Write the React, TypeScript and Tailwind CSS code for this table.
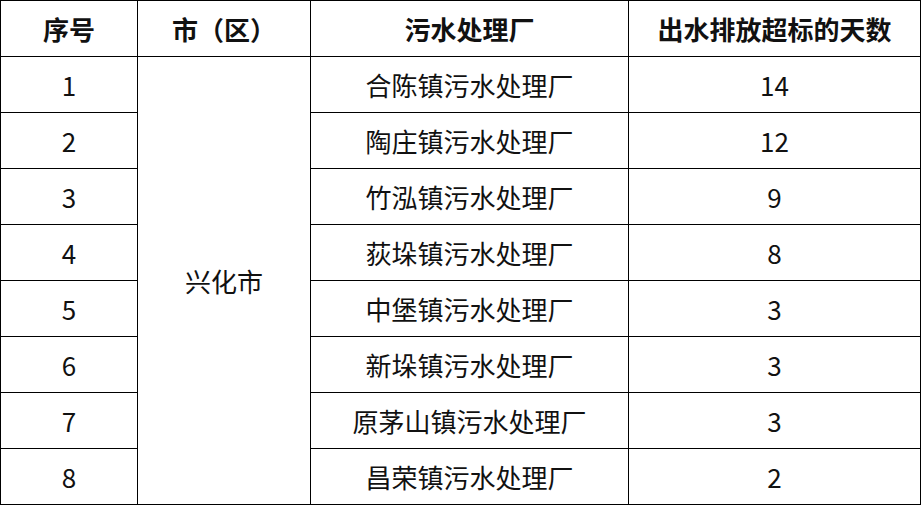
const rows = [
  { no: 1, plant: "合陈镇污水处理厂", days: 14 },
  { no: 2, plant: "陶庄镇污水处理厂", days: 12 },
  { no: 3, plant: "竹泓镇污水处理厂", days: 9 },
  { no: 4, plant: "荻垛镇污水处理厂", days: 8 },
  { no: 5, plant: "中堡镇污水处理厂", days: 3 },
  { no: 6, plant: "新垛镇污水处理厂", days: 3 },
  { no: 7, plant: "原茅山镇污水处理厂", days: 3 },
  { no: 8, plant: "昌荣镇污水处理厂", days: 2 },
];

export default function App() {
  return (
    <div className="w-[921px] h-[506px] bg-white font-['Noto_Sans_CJK_SC','Noto_Sans',sans-serif] text-[#111]">
      <table className="table-fixed border-collapse w-[920px] text-center text-[26px] leading-none">
        <colgroup>
          <col className="w-[137px]" />
          <col className="w-[173px]" />
          <col className="w-[318px]" />
          <col className="w-[292px]" />
        </colgroup>
        <thead>
          <tr className="h-[56px] font-bold">
            <th className="border border-black">序号</th>
            <th className="border border-black">市（区）</th>
            <th className="border border-black">污水处理厂</th>
            <th className="border border-black">出水排放超标的天数</th>
          </tr>
        </thead>
        <tbody>
          {rows.map((r, i) => (
            <tr key={r.no} className="h-[56px]">
              <td className="border border-black">{r.no}</td>
              {i === 0 && (
                <td rowSpan={rows.length} className="border border-black">
                  兴化市
                </td>
              )}
              <td className="border border-black">{r.plant}</td>
              <td className="border border-black">{r.days}</td>
            </tr>
          ))}
        </tbody>
      </table>
    </div>
  );
}
